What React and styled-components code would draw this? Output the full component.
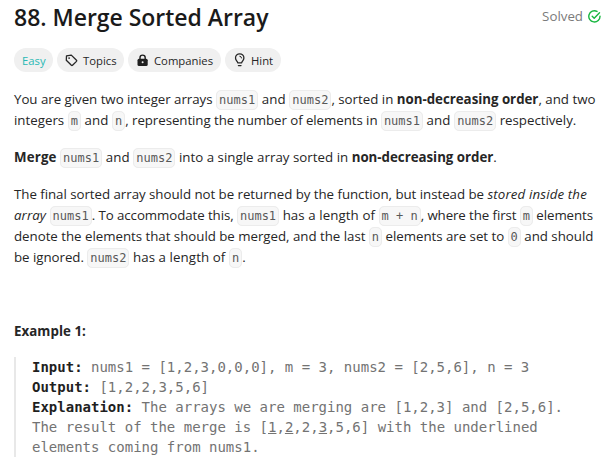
import React from "react";
import styled, { createGlobalStyle } from "styled-components";

const GlobalStyle = createGlobalStyle`
  body {
    margin: 0;
    background: #fff;
    color: #262626;
    font-family: "Open Sans", "Noto Sans", sans-serif;
  }
`;

const Page = styled.main`
  box-sizing: border-box;
  width: 610px;
  height: 465px;
  padding: 0 9px 0 14px;
  overflow: hidden;
`;

const Header = styled.header`
  display: flex;
  justify-content: space-between;
  height: 48px;
`;

const Title = styled.h1`
  margin: 0;
  padding-top: 1px;
  font-size: 23px;
  font-weight: 600;
  line-height: 32px;
  letter-spacing: -0.02px;
  white-space: nowrap;
  color: #1a1a1a;
`;

const Status = styled.div`
  display: flex;
  align-items: center;
  gap: 5px;
  height: 32px;
  font-size: 13.3px;
  line-height: 20px;
  color: #7b7b7b;
`;

const Tags = styled.div`
  display: flex;
  gap: 4px;
  height: 24px;
  margin-bottom: 17px;
`;

const Tag = styled.span`
  box-sizing: border-box;
  display: flex;
  align-items: center;
  gap: 5px;
  width: ${(p) => p.$width}px;
  padding: 1px 0 0 8px;
  border-radius: 12px;
  background: #f0f0f0;
  color: ${(p) => p.$color || "#262626"};
  font-size: 11.3px;
  white-space: nowrap;

  svg {
    flex: none;
    margin-top: -1px;
  }
`;

const Paragraph = styled.p`
  margin: 0 0 ${(p) => (p.$gap === undefined ? 16 : p.$gap)}px;
  font-size: 13.3px;
  line-height: 21px;
`;

const Line = styled.span`
  display: block;
  height: 21px;
  white-space: pre;
`;

const Text = styled.span`
  letter-spacing: ${(p) => p.$track || 0}px;
`;

const Strong = styled.strong`
  font-weight: 700;
  letter-spacing: ${(p) => p.$track || 0}px;
`;

const Em = styled.em`
  letter-spacing: ${(p) => p.$track || 0}px;
`;

const Code = styled.code`
  padding: 2px;
  border: 1px solid #ececec;
  border-radius: 5px;
  background: #f7f7f7;
  color: #595959;
  font: 12px "DejaVu Sans Mono", monospace;
`;

const Example = styled.pre`
  margin: 0;
  padding-left: 16px;
  border-left: 2px solid #e8e8e8;
  color: #737373;
  font: 14px/20px "DejaVu Sans Mono", monospace;

  strong {
    color: #1f1f1f;
  }
  u {
    text-underline-offset: 1px;
  }
`;

const CheckIcon = () => (
  <svg width="13" height="13" viewBox="0 0 13 13" fill="none" stroke="#16b63e" strokeWidth="1.4" strokeLinecap="round" strokeLinejoin="round">
    <path d="M9 1.4A5.6 5.6 0 1 0 12 6.1" />
    <path d="M4.2 6.2l2 2 5.3-5.4" />
  </svg>
);

const TopicIcon = () => (
  <svg width="13" height="13" viewBox="0 0 13 13" fill="none" stroke="#262626" strokeWidth="1.3" strokeLinejoin="round">
    <path d="M1.5 1.8 6.3 1.1 11.5 6.3a.8.8 0 0 1 0 1.1L7.5 11.3a.8.8 0 0 1-1.1 0L1.3 6.2z" />
    <circle cx="4.1" cy="4.1" r=".85" fill="#262626" stroke="none" />
  </svg>
);

const LockIcon = () => (
  <svg width="13" height="13" viewBox="0 0 13 13">
    <path d="M4 5V3.7a2.6 2.6 0 0 1 5.2 0V5" fill="none" stroke="#1f1f1f" strokeWidth="1.4" />
    <rect x="1.5" y="4.7" width="10.2" height="7.3" rx="1.5" fill="#1f1f1f" />
    <circle cx="6.6" cy="8.3" r="1" fill="#f0f0f0" />
  </svg>
);

const HintIcon = () => (
  <svg width="13" height="14" viewBox="0 0 13 14" fill="none" stroke="#262626" strokeWidth="1.3" strokeLinecap="round" strokeLinejoin="round">
    <path d="M4.7 9.8C4.6 8.4 2.5 7.5 2.5 5a4.2 4.2 0 0 1 8.4 0c0 2.5-2.1 3.4-2.2 4.8z" />
    <path d="M5.4 12.6h2.6" />
    <path d="M6.8 3.2a1.9 1.9 0 0 1 1.8 1.8" strokeWidth="1" />
  </svg>
);

export default function App() {
  return (
    <Page>
      <GlobalStyle />
      <Header>
        <Title>88. Merge Sorted Array</Title>
        <Status>
          Solved
          <CheckIcon />
        </Status>
      </Header>
      <Tags>
        <Tag $width={39} $color="#29b9b5">Easy</Tag>
        <Tag $width={67}><TopicIcon />Topics</Tag>
        <Tag $width={93}><LockIcon />Companies</Tag>
        <Tag $width={56}><HintIcon />Hint</Tag>
      </Tags>
      <Paragraph>
        <Line>
          <Text $track={-0.03}>You are given two integer arrays </Text>
          <Code>nums1</Code>
          <Text $track={0.11}> and </Text>
          <Code>nums2</Code>
          <Text>, sorted in </Text>
          <Strong $track={-0.02}>non-decreasing order</Strong>
          <Text>, and two</Text>
        </Line>
        <Line>
          <Text>integers </Text>
          <Code>m</Code>
          <Text $track={0.11}> and </Text>
          <Code>n</Code>
          <Text $track={-0.065}>, representing the number of elements in </Text>
          <Code>nums1</Code>
          <Text $track={0.11}> and </Text>
          <Code>nums2</Code>
          <Text $track={-0.03}> respectively.</Text>
        </Line>
      </Paragraph>
      <Paragraph>
        <Line>
          <Strong $track={0.15}>Merge</Strong>
          <Text> </Text>
          <Code>nums1</Code>
          <Text $track={0.11}> and </Text>
          <Code>nums2</Code>
          <Text $track={0.02}> into a single array sorted in </Text>
          <Strong $track={-0.02}>non-decreasing order</Strong>.
        </Line>
      </Paragraph>
      <Paragraph>
        <Line>
          <Text $track={-0.037}>The final sorted array should not be returned by the function, but instead be </Text>
          <Em $track={0.14}>stored inside the</Em>
        </Line>
        <Line>
          <Em $track={0.08}>array</Em>
          <Text> </Text>
          <Code>nums1</Code>
          <Text $track={-0.08}>. To accommodate this, </Text>
          <Code>nums1</Code>
          <Text $track={0.08}> has a length of </Text>
          <Code>m + n</Code>
          <Text $track={-0.095}>, where the first </Text>
          <Code>m</Code>
          <Text $track={-0.09}> elements</Text>
        </Line>
        <Line>
          <Text $track={-0.025}>denote the elements that should be merged, and the last </Text>
          <Code>n</Code>
          <Text $track={-0.03}> elements are set to </Text>
          <Code>0</Code>
          <Text $track={-0.02}> and should</Text>
        </Line>
        <Line>
          <Text $track={-0.04}>be ignored. </Text>
          <Code>nums2</Code>
          <Text $track={0.08}> has a length of </Text>
          <Code>n</Code>.
        </Line>
      </Paragraph>
      <Paragraph>&nbsp;</Paragraph>
      <Paragraph $gap={15}>
        <Line>
          <Strong $track={0.05}>Example 1:</Strong>
        </Line>
      </Paragraph>
      <Example>
        <strong>Input:</strong>{" nums1 = [1,2,3,0,0,0], m = 3, nums2 = [2,5,6], n = 3\n"}
        <strong>Output:</strong>{" [1,2,2,3,5,6]\n"}
        <strong>Explanation:</strong>{" The arrays we are merging are [1,2,3] and [2,5,6].\nThe result of the merge is ["}
        <u>1</u>,<u>2</u>,2,<u>3</u>{",5,6] with the underlined\nelements coming from nums1."}
      </Example>
    </Page>
  );
}
